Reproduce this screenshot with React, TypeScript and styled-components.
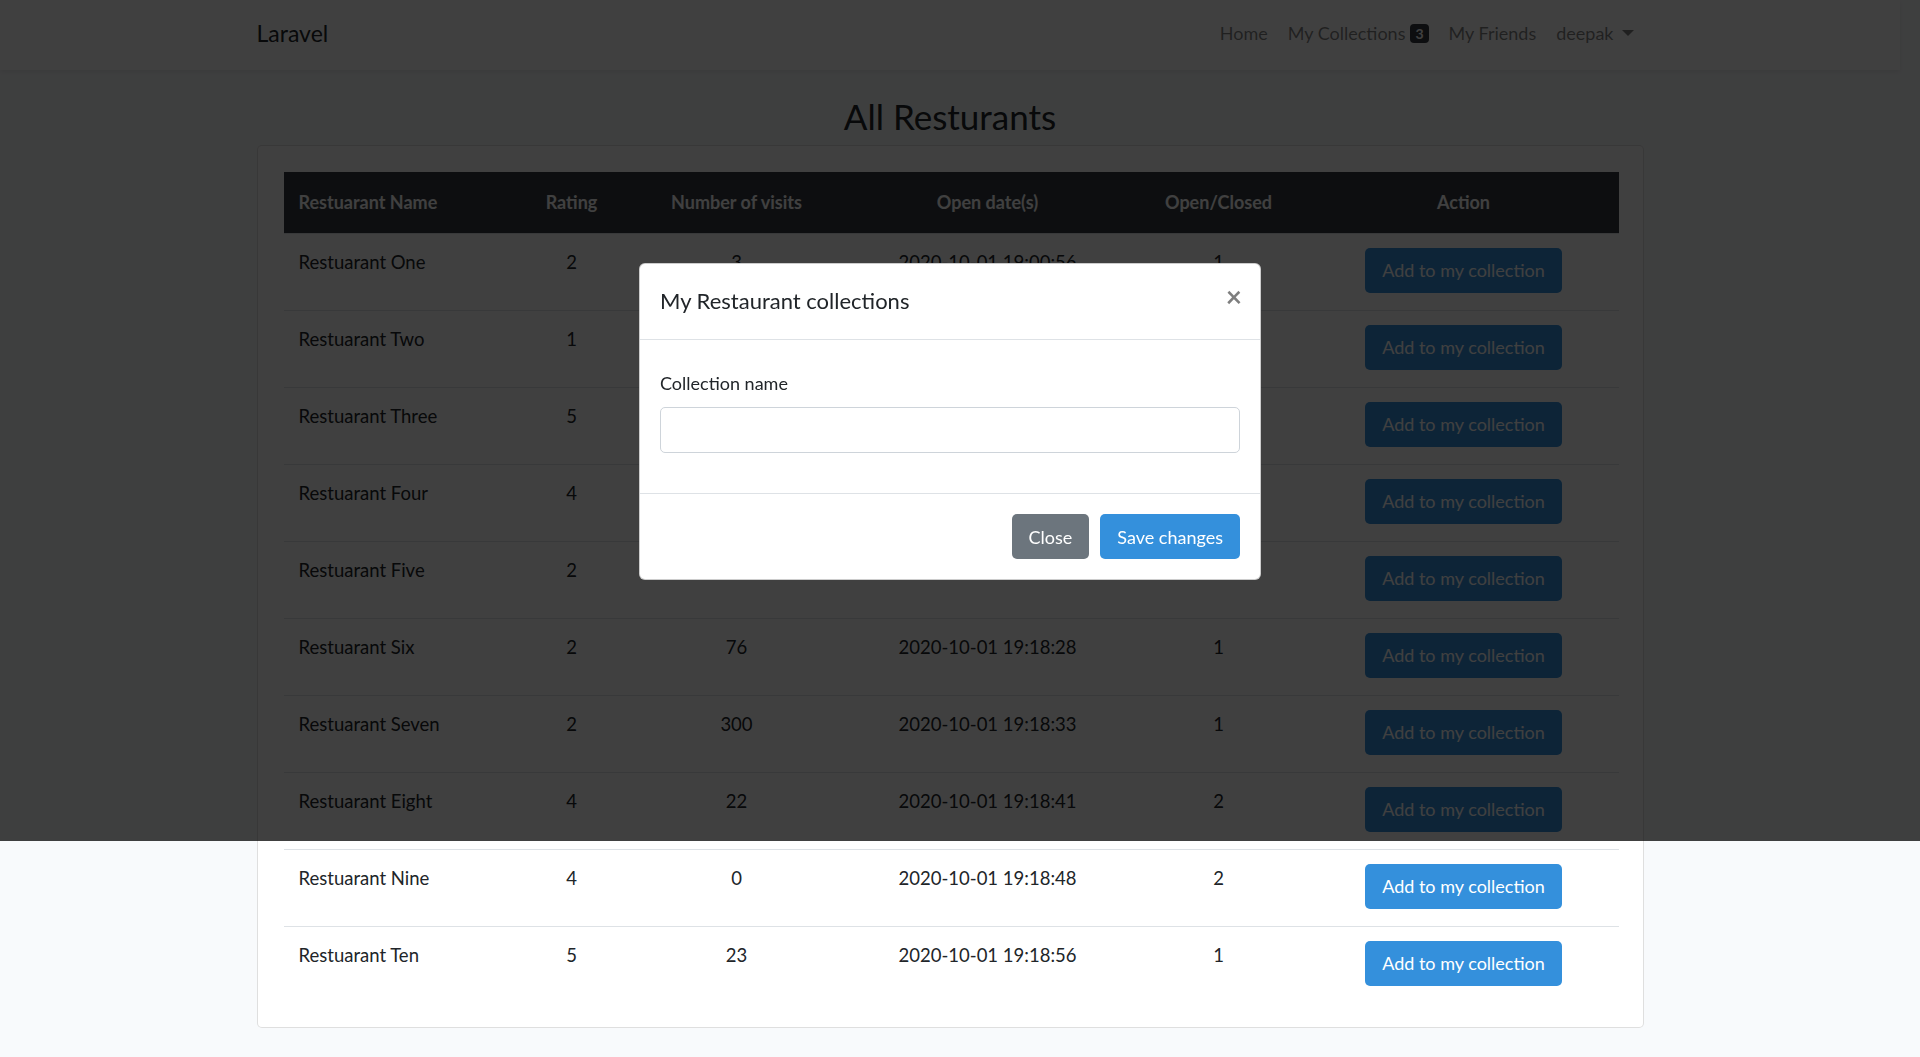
import { createGlobalStyle } from 'styled-components'
import styled from 'styled-components'

const GlobalStyle = createGlobalStyle`
  html, body {
    margin: 0;
    height: 100%;
  }
  body {
    padding-right: 20px;
    background: #f8fafc;
    color: #212529;
    font-family: Lato, 'Open Sans', sans-serif;
    font-size: 18px;
    line-height: 28px;
    overflow: hidden;
  }
  * { box-sizing: border-box; }
`

const Navbar = styled.nav`
  height: 70px;
  background: #fff;
  box-shadow: 0 2px 5px rgba(0, 0, 0, 0.075);
`

const Container = styled.div`
  width: 1387px;
  margin: 0 auto;
`

const NavInner = styled(Container)`
  height: 100%;
  display: flex;
  align-items: center;
  justify-content: space-between;
`

const Brand = styled.a`
  font-size: 23px;
  color: #212529;
  margin-top: -4px;
`

const NavList = styled.ul`
  display: flex;
  align-items: center;
  list-style: none;
  margin: -4px 0 0;
  padding: 0;
`

const NavLink = styled.li`
  padding: 0 10px;
  color: rgba(0, 0, 0, 0.5);
  display: flex;
  align-items: center;
`

const Badge = styled.span`
  display: inline-block;
  margin-left: 5px;
  padding: 0 5px;
  height: 19px;
  line-height: 19px;
  border-radius: 4px;
  background: #343a40;
  color: #fff;
  font-size: 14px;
  font-weight: 700;
`

const Caret = styled.span`
  display: inline-block;
  margin-left: 8px;
  border-top: 6px solid rgba(0, 0, 0, 0.5);
  border-left: 6px solid transparent;
  border-right: 6px solid transparent;
`

const Main = styled.main`
  padding-top: 26px;
`

const Title = styled.h2`
  margin: 0 0 9px;
  text-align: center;
  font-size: 35px;
  font-weight: 400;
  line-height: 40px;
`

const Card = styled.div`
  background: #fff;
  border: 1px solid rgba(0, 0, 0, 0.125);
  border-radius: 5px;
  padding: 26px 24px 24px 26px;
`

const Table = styled.table`
  width: 1335px;
  border-collapse: collapse;
  table-layout: fixed;
`

const Th = styled.th<{ $w: number; $left?: boolean }>`
  width: ${(p) => p.$w}px;
  height: 61px;
  padding: 0 15px;
  background: #343a40;
  color: #fff;
  font-weight: 700;
  text-align: ${(p) => (p.$left ? 'left' : 'center')};
`

const Td = styled.td<{ $left?: boolean }>`
  padding: 14px 15px 17px;
  border-top: 1px solid #dee2e6;
  vertical-align: top;
  font-size: 18.5px;
  text-align: ${(p) => (p.$left ? 'left' : 'center')};
`

const Button = styled.button<{ $variant?: 'primary' | 'secondary' }>`
  height: 45px;
  padding: 0 16px;
  border: 1px solid transparent;
  border-radius: 5px;
  background: ${(p) => (p.$variant === 'secondary' ? '#6c757d' : '#3490dc')};
  color: #fff;
  font-family: inherit;
  font-size: 18px;
  cursor: pointer;
`

const Backdrop = styled.div`
  position: fixed;
  top: 0;
  left: 0;
  right: 0;
  height: 841px;
  background: rgba(0, 0, 0, 0.75);
`

const Modal = styled.div`
  position: fixed;
  top: 263px;
  left: 639px;
  width: 622px;
  background: #fff;
  border: 1px solid rgba(0, 0, 0, 0.2);
  border-radius: 6px;
`

const ModalHeader = styled.div`
  display: flex;
  justify-content: space-between;
  align-items: center;
  padding: 18px 20px 20px;
  border-bottom: 1px solid #dee2e6;
`

const ModalTitle = styled.h5`
  margin: 0;
  font-size: 22px;
  font-weight: 400;
  line-height: 37px;
`

const CloseX = styled.span`
  font-size: 28px;
  font-weight: 700;
  color: #000;
  opacity: 0.5;
  line-height: 30px;
  margin-top: -9px;
  margin-right: -2px;
`

const ModalBody = styled.div`
  padding: 29px 20px 20px;
`

const Label = styled.label`
  display: block;
  margin-bottom: 10px;
`

const Input = styled.input`
  display: block;
  width: 100%;
  height: 46px;
  margin-bottom: 20px;
  border: 1px solid #ced4da;
  border-radius: 5px;
  font-family: inherit;
  font-size: 18px;
`

const ModalFooter = styled.div`
  display: flex;
  justify-content: flex-end;
  gap: 11px;
  padding: 20px;
  border-top: 1px solid #dee2e6;
`

const cols = [
  { label: 'Restuarant Name', w: 233, left: true },
  { label: 'Rating', w: 110 },
  { label: 'Number of visits', w: 220 },
  { label: 'Open date(s)', w: 282 },
  { label: 'Open/Closed', w: 180 },
  { label: 'Action', w: 310 },
]

const rows = [
  ['Restuarant One', '2', '3', '2020-10-01 19:00:56', '1'],
  ['Restuarant Two', '1', '15', '2020-10-01 19:18:04', '1'],
  ['Restuarant Three', '5', '120', '2020-10-01 19:18:11', '1'],
  ['Restuarant Four', '4', '8', '2020-10-01 19:18:17', '2'],
  ['Restuarant Five', '2', '41', '2020-10-01 19:18:22', '1'],
  ['Restuarant Six', '2', '76', '2020-10-01 19:18:28', '1'],
  ['Restuarant Seven', '2', '300', '2020-10-01 19:18:33', '1'],
  ['Restuarant Eight', '4', '22', '2020-10-01 19:18:41', '2'],
  ['Restuarant Nine', '4', '0', '2020-10-01 19:18:48', '2'],
  ['Restuarant Ten', '5', '23', '2020-10-01 19:18:56', '1'],
]

export default function App() {
  return (
    <>
      <GlobalStyle />
      <Navbar>
        <NavInner>
          <Brand>Laravel</Brand>
          <NavList>
            <NavLink>Home</NavLink>
            <NavLink>
              My Collections<Badge>3</Badge>
            </NavLink>
            <NavLink>My Friends</NavLink>
            <NavLink>
              deepak<Caret />
            </NavLink>
          </NavList>
        </NavInner>
      </Navbar>

      <Main>
        <Container>
          <Title>All Resturants</Title>
          <Card>
            <Table>
              <thead>
                <tr>
                  {cols.map((c) => (
                    <Th key={c.label} $w={c.w} $left={c.left}>
                      {c.label}
                    </Th>
                  ))}
                </tr>
              </thead>
              <tbody>
                {rows.map((r) => (
                  <tr key={r[0]}>
                    <Td $left>{r[0]}</Td>
                    <Td>{r[1]}</Td>
                    <Td>{r[2]}</Td>
                    <Td>{r[3]}</Td>
                    <Td>{r[4]}</Td>
                    <Td>
                      <Button>Add to my collection</Button>
                    </Td>
                  </tr>
                ))}
              </tbody>
            </Table>
          </Card>
        </Container>
      </Main>

      <Backdrop />
      <Modal>
        <ModalHeader>
          <ModalTitle>My Restaurant collections</ModalTitle>
          <CloseX>×</CloseX>
        </ModalHeader>
        <ModalBody>
          <Label>Collection name</Label>
          <Input type="text" />
        </ModalBody>
        <ModalFooter>
          <Button $variant="secondary">Close</Button>
          <Button>Save changes</Button>
        </ModalFooter>
      </Modal>
    </>
  )
}
